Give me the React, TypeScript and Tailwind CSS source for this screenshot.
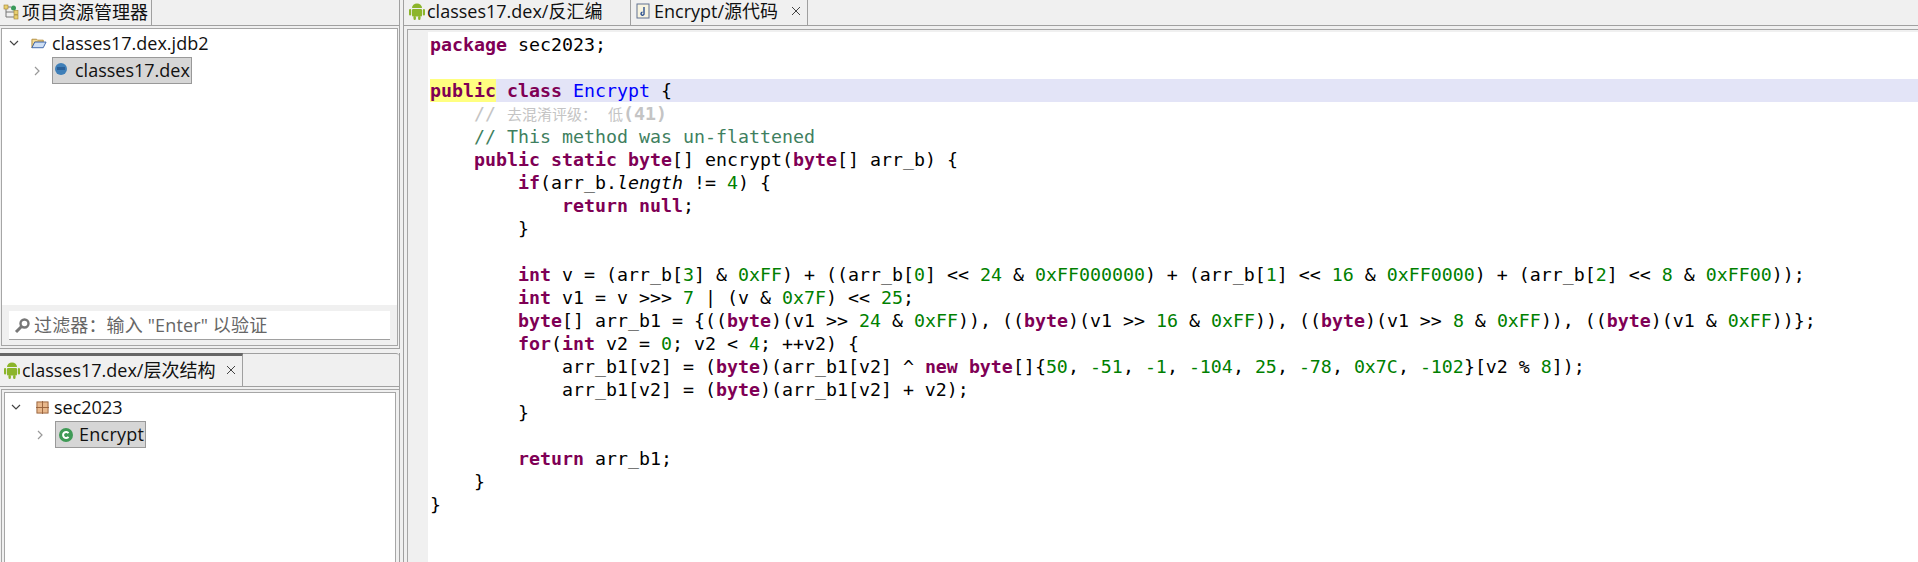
import type { ReactNode } from 'react';

const MONO = "font-['DejaVu_Sans_Mono',monospace] text-[18.27px] leading-[23px]";
const UI = "font-['Open_Sans','Noto_Sans_CJK_SC',sans-serif] text-[18px] text-[#111]";

const K = ({ children }: { children: ReactNode }) => <span className="font-bold text-[#7f0055]">{children}</span>;
const N = ({ children }: { children: ReactNode }) => <span className="text-[#008000]">{children}</span>;

function Android() {
  return (
    <svg width="16" height="18" viewBox="0 0 16 18" className="shrink-0">
      <path d="M3 6a5 4.6 0 0 1 10 0Z" fill="#8cb52b" />
      <rect x="3" y="7" width="10" height="7.5" rx="1" fill="#8cb52b" />
      <rect x="0" y="7" width="2.2" height="6.5" rx="1.1" fill="#8cb52b" />
      <rect x="13.8" y="7" width="2.2" height="6.5" rx="1.1" fill="#8cb52b" />
      <rect x="4.5" y="14" width="2.4" height="4" rx="1.2" fill="#8cb52b" />
      <rect x="9.1" y="14" width="2.4" height="4" rx="1.2" fill="#8cb52b" />
    </svg>
  );
}

function Close() {
  return (
    <svg width="10" height="10" viewBox="0 0 10 10" className="shrink-0">
      <path d="M1 1l8 8M9 1l-8 8" stroke="#444" strokeWidth="1" />
    </svg>
  );
}

function Chevron({ open }: { open?: boolean }) {
  return (
    <svg width="10" height="10" viewBox="0 0 10 10" className="shrink-0">
      <path d={open ? 'M1 3l4 4 4-4' : 'M3 1l4 4-4 4'} fill="none" stroke={open ? '#444' : '#999'} strokeWidth="1.2" />
    </svg>
  );
}

function Selected({ children }: { children: ReactNode }) {
  return <div className="flex h-[27px] items-center border border-[#999] bg-[#d6d6d6]">{children}</div>;
}

const code: ReactNode[] = [
  <><K>package</K> sec2023;</>,
  '',
  <span className="flex bg-[#e3e4f7]"><span className="bg-[#ffff80]"><K>public</K></span><span className="whitespace-pre"> <K>class</K> <span className="text-[#0000ff]">Encrypt</span> {'{'}</span></span>,
  <span className="text-[#c4c4c4]">    // <span className="font-['Noto_Sans_CJK_SC'] text-[15px]">去混淆评级：</span> <span className="font-['Noto_Sans_CJK_SC'] text-[15px]">低</span><span className="font-bold">(41)</span></span>,
  <span className="text-[#3f7f5f]">    // This method was un-flattened</span>,
  <>    <K>public</K> <K>static</K> <K>byte</K>[] encrypt(<K>byte</K>[] arr_b) {'{'}</>,
  <>        <K>if</K>(arr_b.<i>length</i> != <N>4</N>) {'{'}</>,
  <>            <K>return</K> <K>null</K>;</>,
  '        }',
  '',
  <>        <K>int</K> v = (arr_b[<N>3</N>] &amp; <N>0xFF</N>) + ((arr_b[<N>0</N>] &lt;&lt; <N>24</N> &amp; <N>0xFF000000</N>) + (arr_b[<N>1</N>] &lt;&lt; <N>16</N> &amp; <N>0xFF0000</N>) + (arr_b[<N>2</N>] &lt;&lt; <N>8</N> &amp; <N>0xFF00</N>));</>,
  <>        <K>int</K> v1 = v &gt;&gt;&gt; <N>7</N> | (v &amp; <N>0x7F</N>) &lt;&lt; <N>25</N>;</>,
  <>        <K>byte</K>[] arr_b1 = {'{'}((<K>byte</K>)(v1 &gt;&gt; <N>24</N> &amp; <N>0xFF</N>)), ((<K>byte</K>)(v1 &gt;&gt; <N>16</N> &amp; <N>0xFF</N>)), ((<K>byte</K>)(v1 &gt;&gt; <N>8</N> &amp; <N>0xFF</N>)), ((<K>byte</K>)(v1 &amp; <N>0xFF</N>)){'}'};</>,
  <>        <K>for</K>(<K>int</K> v2 = <N>0</N>; v2 &lt; <N>4</N>; ++v2) {'{'}</>,
  <>            arr_b1[v2] = (<K>byte</K>)(arr_b1[v2] ^ <K>new</K> <K>byte</K>[]{'{'}<N>50</N>, <N>-51</N>, <N>-1</N>, <N>-104</N>, <N>25</N>, <N>-78</N>, <N>0x7C</N>, <N>-102</N>{'}'}[v2 % <N>8</N>]);</>,
  <>            arr_b1[v2] = (<K>byte</K>)(arr_b1[v2] + v2);</>,
  '        }',
  '',
  <>        <K>return</K> arr_b1;</>,
  '    }',
  '}',
];

export default function App() {
  return (
    <div className="flex h-[562px] w-[1918px] overflow-hidden bg-[#f0f0f0]">
      <div className="flex w-[400px] shrink-0 flex-col">
        <div className="flex h-[349px] shrink-0 flex-col border-r border-b border-[#a0a0a0]">
          <div className="flex h-[26px] shrink-0 border-b border-[#a0a0a0]">
            <div className={`flex w-[152px] items-center gap-px border-r border-[#a0a0a0] pb-px pl-[3px] ${UI}`}>
              <svg width="18" height="18" viewBox="0 0 18 18" className="shrink-0">
                <path d="M3 5v9h8M3 9h8M5 4h3" fill="none" stroke="#777" />
                <rect x="1" y="2" width="4" height="4" fill="#e8d070" stroke="#a08030" strokeWidth="0.6" />
                <circle cx="10.5" cy="5" r="2.5" fill="#3a9a5a" />
                <rect x="11" y="7.5" width="4" height="4" fill="#e8d070" stroke="#a08030" strokeWidth="0.6" />
                <rect x="11" y="12" width="4" height="4" fill="#e8d070" stroke="#a08030" strokeWidth="0.6" />
              </svg>
              <span>项目资源管理器</span>
            </div>
          </div>
          <div className="mx-px mt-[2px] flex h-[318px] shrink-0 flex-col border border-[#a6a6a6] bg-white">
            <div className={`flex h-[28px] shrink-0 items-center pl-[7px] ${UI}`}>
              <Chevron open />
              <svg width="16" height="14" viewBox="0 0 17 14" className="ml-[12px] mr-[5px] shrink-0">
                <path d="M1 12V3h5l1 1h6v2H4l-3 6Z" fill="#f5dc96" stroke="#b08a3a" />
                <path d="M1 12l3-6h12l-3 6Z" fill="#cfe0f5" stroke="#3a62a8" />
              </svg>
              <span>classes17.dex.jdb2</span>
            </div>
            <div className={`flex items-center pl-[30px] ${UI}`}>
              <Chevron />
              <div className="ml-[10px]">
                <Selected>
                  <span className="ml-[2px] mr-[8px] flex h-[12px] w-[12px] -translate-y-[2px] items-center justify-center rounded-full bg-[#3f7fb8]">
                    <span className="h-[3px] w-[8px] bg-[#2a5f98]" />
                  </span>
                  <span className="pr-px">classes17.dex</span>
                </Selected>
              </div>
            </div>
            <div className="flex-1" />
            <div className="bg-[#f0f0f0] px-[7px] pb-[5px] pt-[6px]">
              <div className={`flex h-[29px] items-center gap-[3px] border-b border-[#a0a0a0] bg-white pl-[5px] ${UI}`}>
                <svg width="17" height="17" viewBox="0 0 17 17" className="shrink-0">
                  <circle cx="10.5" cy="6.5" r="4" fill="none" stroke="#777" strokeWidth="2.4" />
                  <path d="M7.5 9.5L2 15" stroke="#777" strokeWidth="3" />
                </svg>
                <span className="tracking-[0.15px] text-[#666]">过滤器：输入 "Enter" 以验证</span>
              </div>
            </div>
          </div>
        </div>
        <div className="mt-[4px] flex min-h-0 flex-1 flex-col border-r border-[#a0a0a0]">
          <div className="flex h-[34px] shrink-0 rounded-tr-[3px] border-y border-[#a0a0a0]">
            <div className={`-mt-px flex w-[243px] items-center gap-[2px] border-r border-t-[3px] border-r-[#a0a0a0] border-t-[#666] pb-[2px] pl-[4px] ${UI}`}>
              <Android />
              <span>classes17.dex/层次结构</span>
              <span className="ml-[9px]"><Close /></span>
            </div>
          </div>
          <div className="ml-px mt-[2px] flex min-h-0 flex-1 flex-col border-l border-t border-[#a6a6a6] pl-[2px] pr-[3px] pt-[2px]">
            <div className="min-h-0 flex-1 border-l border-r border-t border-[#a6a6a6] bg-white">
              <div className={`flex h-[28px] items-center pl-[6px] ${UI}`}>
                <Chevron open />
                <svg width="13" height="13" viewBox="0 0 14 14" className="ml-[15px] mr-[5px] shrink-0">
                  <rect x="1" y="1" width="12" height="12" fill="#e8b88c" stroke="#96603a" />
                  <path d="M7 0v14M0 7h14" stroke="#96603a" />
                </svg>
                <span>sec2023</span>
              </div>
              <div className={`flex items-center pl-[30px] ${UI}`}>
                <Chevron />
                <div className="ml-[10px]">
                  <Selected>
                    <svg width="16" height="16" viewBox="0 0 16 16" className="ml-[2px] mr-[5px] shrink-0">
                      <circle cx="8" cy="8" r="7" fill="#3f9a56" />
                      <path d="M10.5 6.2A3 3 0 1 0 10.5 9.8" fill="none" stroke="#fff" strokeWidth="2" />
                    </svg>
                    <span className="pr-px tracking-[0.25px]">Encrypt</span>
                  </Selected>
                </div>
              </div>
            </div>
          </div>
        </div>
      </div>
      <div className="ml-[3px] flex min-w-0 flex-1 flex-col border-l border-[#a0a0a0]">
        <div className="flex h-[26px] shrink-0 border-b border-[#a0a0a0]">
          <div className={`flex w-[227px] items-center gap-[2px] border-r border-[#a0a0a0] pb-[3px] pl-[5px] ${UI}`}>
            <Android />
            <span>classes17.dex/反汇编</span>
          </div>
          <div className={`flex w-[177px] items-center gap-[4px] border-r border-[#a0a0a0] pb-[3px] pl-[5px] ${UI}`}>
            <svg width="14" height="16" viewBox="0 0 14 16" className="shrink-0">
              <rect x="1" y="1" width="12" height="14" fill="#f8f4e0" stroke="#607090" />
              <path d="M8 4v6.5M8 10.5a1.5 1.5 0 1 1-1.5-1.2" fill="none" stroke="#2a4f8f" strokeWidth="1.4" />
            </svg>
            <span>Encrypt/源代码</span>
            <span className="ml-[9px]"><Close /></span>
          </div>
        </div>
        <div className="ml-[3px] mt-[3px] flex min-h-0 flex-1 flex-col border-l border-t border-[#a6a6a6]">
          <div className="flex min-h-0 flex-1 pt-[2px]">
            <div className="w-[20px] shrink-0" />
            <div className="min-w-0 flex-1 bg-white pt-px">
              <div className={`${MONO} whitespace-pre pl-[2px] text-[#000]`}>
                {code.map((line, i) => (
                  <div key={i} className="h-[23px]">{line}</div>
                ))}
              </div>
            </div>
          </div>
        </div>
      </div>
    </div>
  );
}
